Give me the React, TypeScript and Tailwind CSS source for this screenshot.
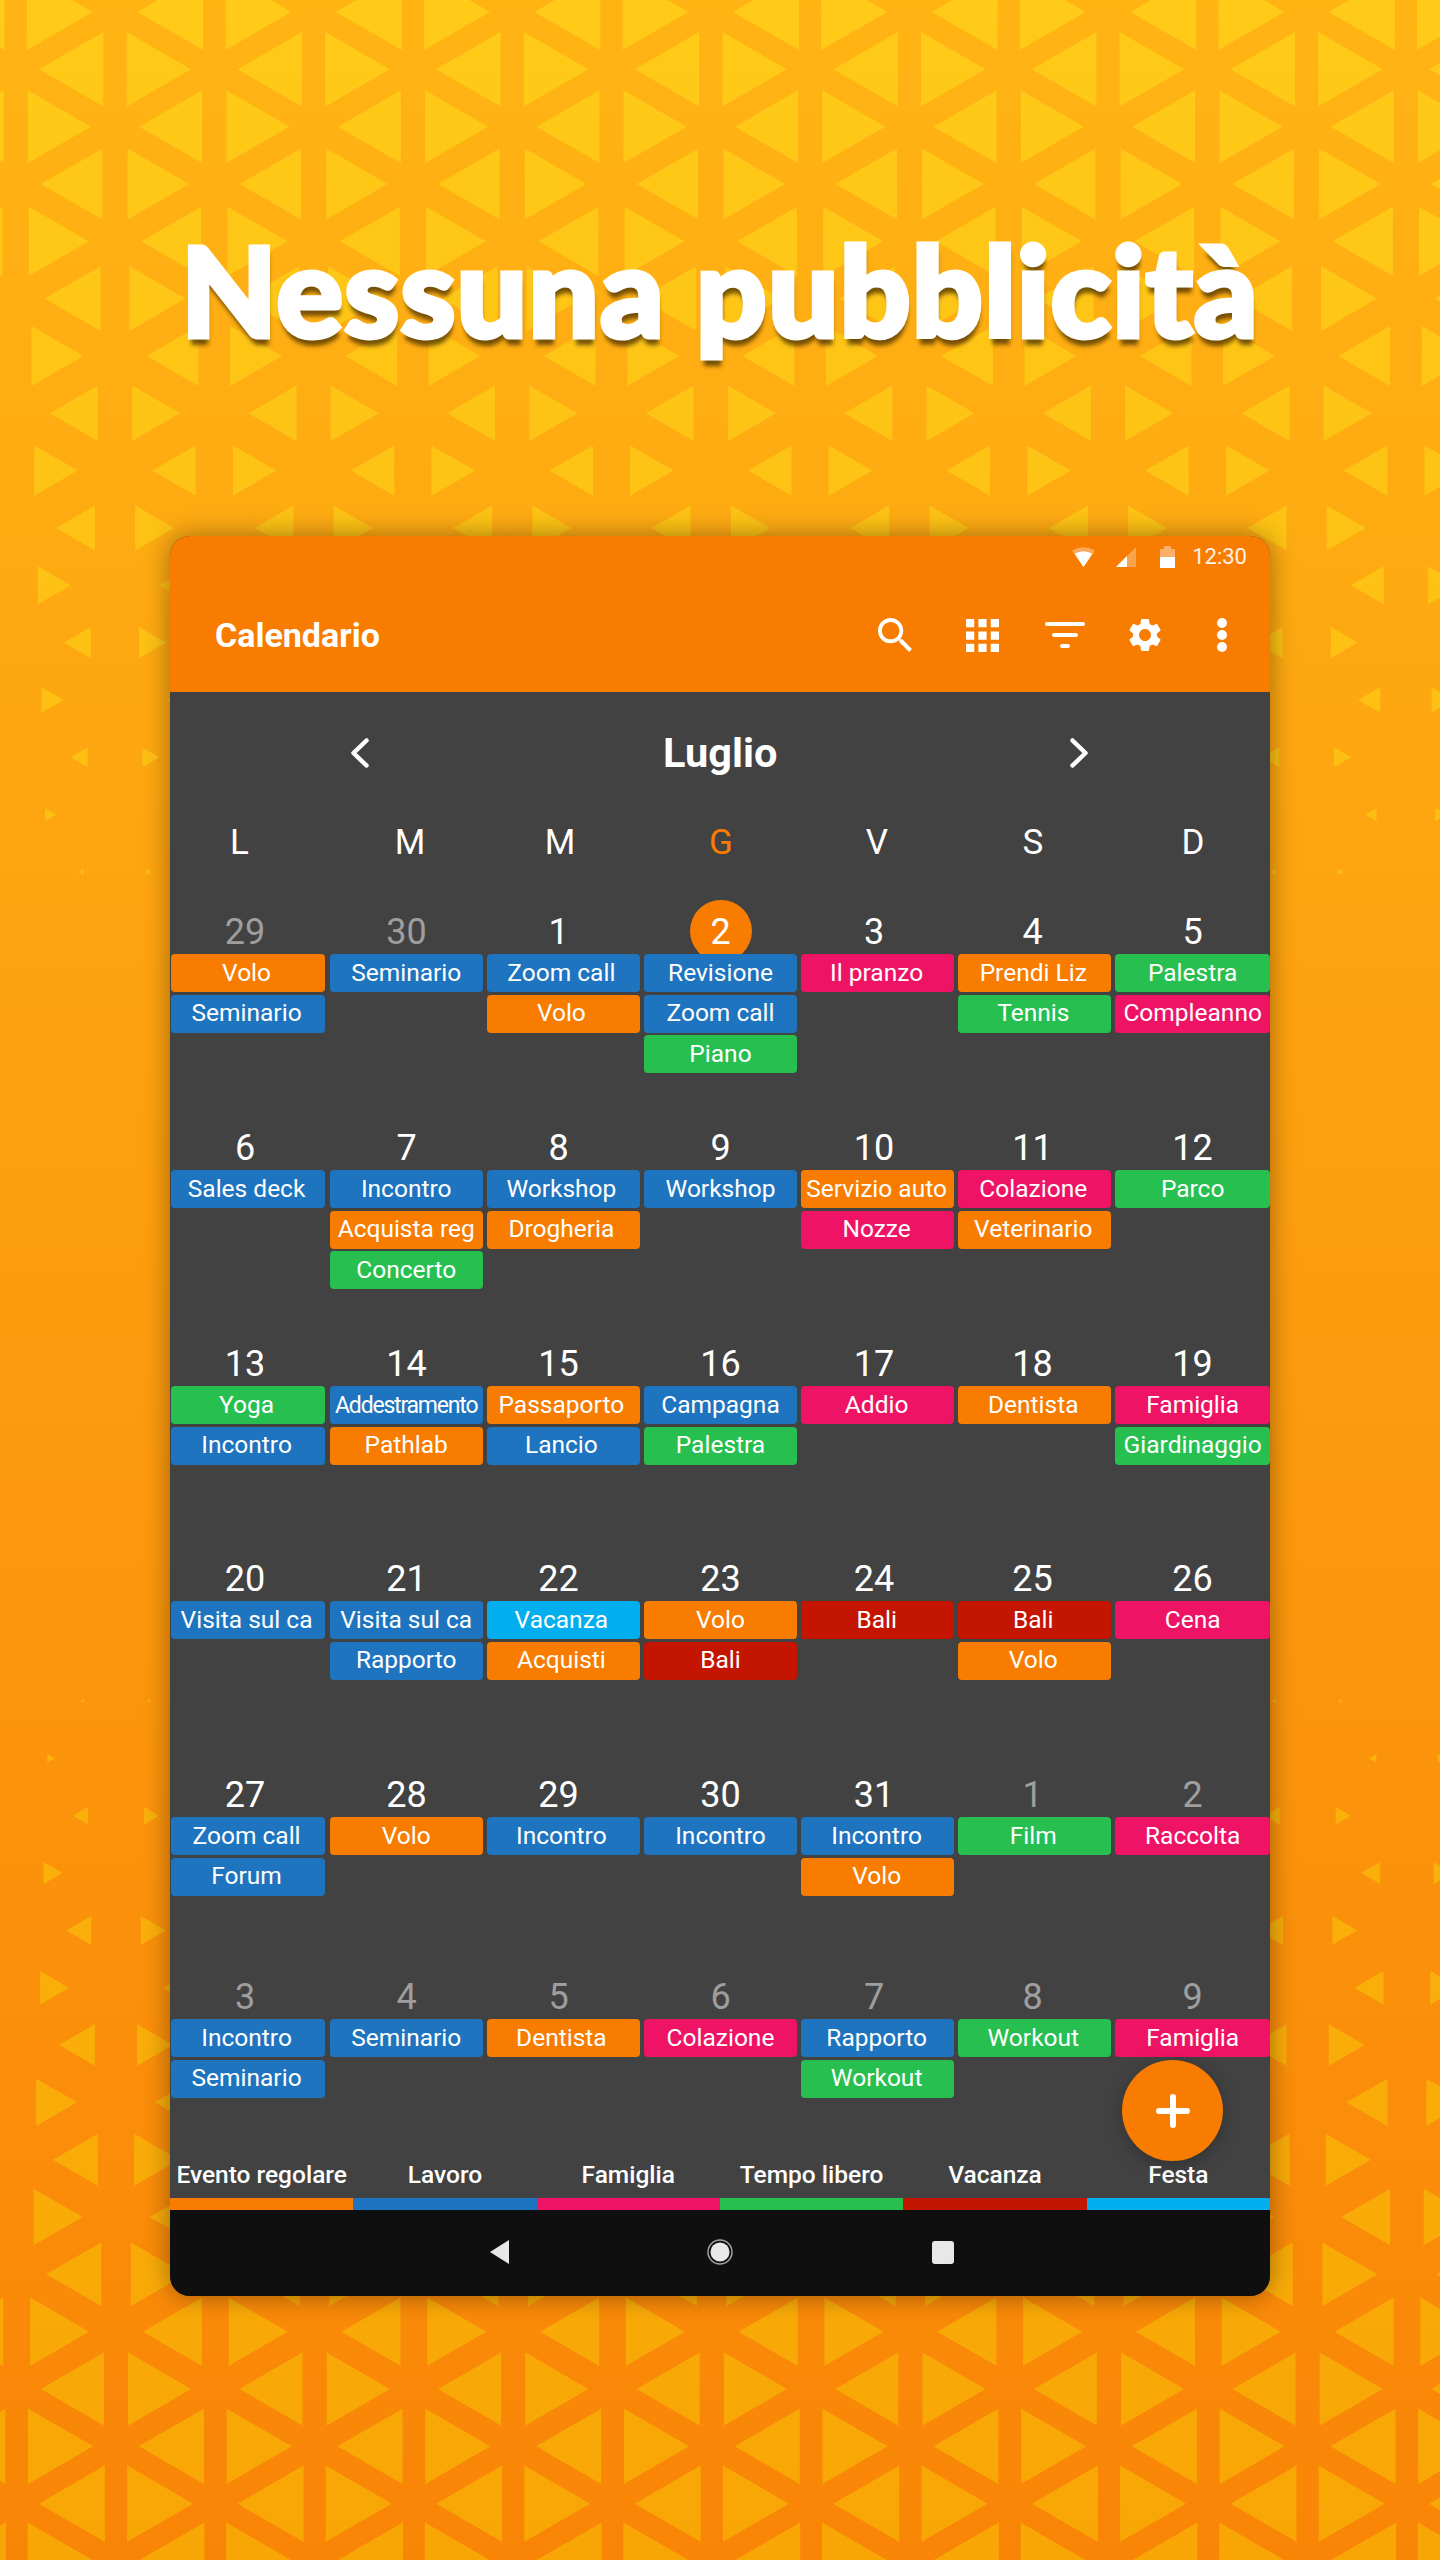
import React from "react";

type Ev = [string, string];
const o = "bg-[#f77c00]";
const b = "bg-[#1e74be]";
const p = "bg-[#ef1365]";
const g = "bg-[#27bf4f]";
const r = "bg-[#c41500]";
const c = "bg-[#03aeee]";

type Day = { n: number; muted?: boolean; today?: boolean; ev: Ev[] };

const weeks: { h: string; days: Day[] }[] = [
  {
    h: "h-[216px]",
    days: [
      { n: 29, muted: true, ev: [["Volo", o], ["Seminario", b]] },
      { n: 30, muted: true, ev: [["Seminario", b]] },
      { n: 1, ev: [["Zoom call", b], ["Volo", o]] },
      { n: 2, today: true, ev: [["Revisione", b], ["Zoom call", b], ["Piano", g]] },
      { n: 3, ev: [["Il pranzo", p]] },
      { n: 4, ev: [["Prendi Liz", o], ["Tennis", g]] },
      { n: 5, ev: [["Palestra", g], ["Compleanno", p]] },
    ],
  },
  {
    h: "h-[216px]",
    days: [
      { n: 6, ev: [["Sales deck", b]] },
      { n: 7, ev: [["Incontro", b], ["Acquista reg", o], ["Concerto", g]] },
      { n: 8, ev: [["Workshop", b], ["Drogheria", o]] },
      { n: 9, ev: [["Workshop", b]] },
      { n: 10, ev: [["Servizio auto", o], ["Nozze", p]] },
      { n: 11, ev: [["Colazione", p], ["Veterinario", o]] },
      { n: 12, ev: [["Parco", g]] },
    ],
  },
  {
    h: "h-[215px]",
    days: [
      { n: 13, ev: [["Yoga", g], ["Incontro", b]] },
      { n: 14, ev: [["Addestramento", b], ["Pathlab", o]] },
      { n: 15, ev: [["Passaporto", o], ["Lancio", b]] },
      { n: 16, ev: [["Campagna", b], ["Palestra", g]] },
      { n: 17, ev: [["Addio", p]] },
      { n: 18, ev: [["Dentista", o]] },
      { n: 19, ev: [["Famiglia", p], ["Giardinaggio", g]] },
    ],
  },
  {
    h: "h-[216px]",
    days: [
      { n: 20, ev: [["Visita sul ca", b]] },
      { n: 21, ev: [["Visita sul ca", b], ["Rapporto", b]] },
      { n: 22, ev: [["Vacanza", c], ["Acquisti", o]] },
      { n: 23, ev: [["Volo", o], ["Bali", r]] },
      { n: 24, ev: [["Bali", r]] },
      { n: 25, ev: [["Bali", r], ["Volo", o]] },
      { n: 26, ev: [["Cena", p]] },
    ],
  },
  {
    h: "h-[202px]",
    days: [
      { n: 27, ev: [["Zoom call", b], ["Forum", b]] },
      { n: 28, ev: [["Volo", o]] },
      { n: 29, ev: [["Incontro", b]] },
      { n: 30, ev: [["Incontro", b]] },
      { n: 31, ev: [["Incontro", b], ["Volo", o]] },
      { n: 1, muted: true, ev: [["Film", g]] },
      { n: 2, muted: true, ev: [["Raccolta", p]] },
    ],
  },
  {
    h: "h-[182px]",
    days: [
      { n: 3, muted: true, ev: [["Incontro", b], ["Seminario", b]] },
      { n: 4, muted: true, ev: [["Seminario", b]] },
      { n: 5, muted: true, ev: [["Dentista", o]] },
      { n: 6, muted: true, ev: [["Colazione", p]] },
      { n: 7, muted: true, ev: [["Rapporto", b], ["Workout", g]] },
      { n: 8, muted: true, ev: [["Workout", g]] },
      { n: 9, muted: true, ev: [["Famiglia", p]] },
    ],
  },
];

const cellPad = [
  "pl-[1px] pr-[2px]",
  "pl-[2.5px] pr-[1.5px]",
  "pl-[2.5px] pr-[1.5px]",
  "pl-[2.5px] pr-[1.5px]",
  "pl-[2.5px] pr-[1.5px]",
  "pl-[2.5px] pr-[1.5px]",
  "pl-[2.5px]",
];

const pillShift = ["pr-[3px]", "", "pr-[4px]", "", "pr-[2px]", "pr-[3px]", ""];

const legend: [string, string][] = [
  ["Evento regolare", o],
  ["Lavoro", b],
  ["Famiglia", p],
  ["Tempo libero", g],
  ["Vacanza", r],
  ["Festa", c],
];

function lerp(table: number[][], y: number) {
  if (y <= table[0][0]) return table[0][1];
  for (let i = 1; i < table.length; i++) {
    if (y <= table[i][0]) {
      const [y0, w0] = table[i - 1];
      const [y1, w1] = table[i];
      return w0 + ((w1 - w0) * (y - y0)) / (y1 - y0);
    }
  }
  return table[table.length - 1][1];
}

const topW = [
  [12, 66], [241, 60], [413, 48], [528, 39], [642, 27], [757, 17], [872, 5.5], [929, 1], [960, 0],
];
const botW = [
  [1642, 0], [1700, 3.5], [1758, 7.5], [1815, 15], [1873, 19], [1930, 25], [1987, 29], [2045, 36],
  [2102, 41], [2159, 45], [2217, 49], [2274, 55], [2332, 59], [2389, 63], [2446, 65], [2503, 66], [2600, 67],
];

function tri(bar: number, y: number, w: number) {
  const h = (w * 2) / Math.sqrt(3) / 2;
  const base = 33.1 - w / 3;
  const f = (n: number) => n.toFixed(1);
  return (
    `M${f(bar + base)} ${f(y - h)}L${f(bar + base + w)} ${f(y)}L${f(bar + base)} ${f(y + h)}Z` +
    `M${f(bar - base)} ${f(y - h)}L${f(bar - base - w)} ${f(y)}L${f(bar - base)} ${f(y + h)}Z`
  );
}

function buildPattern() {
  let d = "";
  for (let k = 0; k <= 17; k++) {
    const y = 12 + 57.33 * k;
    const w = lerp(topW, y);
    if (w < 0.5) continue;
    const x0 = k % 2 === 0 ? 15.7 : 115;
    for (let n = -1; n < 9; n++) d += tri(x0 + 198.6 * n, y, w);
  }
  for (let j = -13; j <= 4; j++) {
    const y = 2389 + 57.33 * j;
    const w = lerp(botW, y);
    if (w < 0.5) continue;
    const x0 = j % 2 === 0 ? 116 : 16.7;
    for (let n = -1; n < 9; n++) d += tri(x0 + 198.6 * n, y, w);
  }
  return d;
}

function Background() {
  return (
    <svg className="absolute inset-0" width="1440" height="2560" viewBox="0 0 1440 2560">
      <defs>
        <linearGradient id="tg" gradientUnits="userSpaceOnUse" x1="0" y1="0" x2="0" y2="2560">
          <stop offset="0" stopColor="#ffca18" />
          <stop offset="1" stopColor="#f8a605" />
        </linearGradient>
      </defs>
      <path d={buildPattern()} fill="url(#tg)" />
    </svg>
  );
}

function EventPill({ label, color, shift }: { label: string; color: string; shift: string }) {
  const small = label === "Addestramento";
  return (
    <div
      className={`h-[38px] rounded-[4px] flex items-center justify-center overflow-hidden whitespace-nowrap text-white leading-none ${color} ${shift} ${
        small ? "text-[23px] tracking-[-1.2px]" : "text-[24.5px]"
      }`}
    >
      {label}
    </div>
  );
}

function Week({ h, days }: { h: string; days: Day[] }) {
  return (
    <div className={h}>
      <div className="grid grid-cols-[150px_173px_131px_193px_114px_203px_117px] h-[46px] items-center">
        {days.map((d, i) => (
          <div key={i} className="relative flex justify-center">
            {d.today && (
              <div className="absolute top-1/2 left-1/2 -translate-x-1/2 -translate-y-1/2 w-[62px] h-[62px] rounded-full bg-[#f77c00]" />
            )}
            <span
              className={`relative pt-[2px] text-[36px] leading-none ${
                d.muted ? "text-[#9e9e9e]" : "text-white"
              }`}
            >
              {d.n}
            </span>
          </div>
        ))}
      </div>
      <div className="relative grid grid-cols-7">
        {days.map((d, i) => (
          <div key={i} className={`flex flex-col gap-y-[2.5px] ${cellPad[i]}`}>
            {d.ev.map((e, j) => (
              <EventPill key={j} label={e[0]} color={e[1]} shift={pillShift[i]} />
            ))}
          </div>
        ))}
      </div>
    </div>
  );
}

function StatusBar() {
  return (
    <div className="h-[42px] flex items-center justify-end pr-[23px] text-white/90">
      <svg width="23" height="20" viewBox="0 0 23 20" className="mr-[21px]">
        <path d="M0 3.5Q11.5-3 23 3.5L11.5 20Z" fill="#fff" fillOpacity=".35" />
        <path d="M2.6 6.7Q11.5 1.6 20.4 6.7L11.5 20Z" fill="#fff" />
      </svg>
      <svg width="20" height="20" viewBox="0 0 20 20" className="mr-[24px]">
        <path d="M0 20L20 0V20Z" fill="#fff" fillOpacity=".3" />
        <path d="M0 20L11 9V20Z" fill="#fff" />
      </svg>
      <svg width="15" height="22" viewBox="0 0 15 22" className="mr-[17px]">
        <path d="M4 0H11V3H15V11H0V3H4Z" fill="#fff" fillOpacity=".4" />
        <path d="M0 11H15V22H0Z" fill="#fff" />
      </svg>
      <span className="text-[22px] leading-none text-white/90">12:30</span>
    </div>
  );
}

function Toolbar() {
  return (
    <div className="h-[114px] flex items-center pl-[45px] pr-[43px] text-white">
      <span className="text-[34px] font-bold leading-none">Calendario</span>
      <svg className="ml-auto" width="34" height="34" viewBox="3 3 17.5 17.5" fill="#fff">
        <path d="M15.5 14h-.79l-.28-.27C15.41 12.59 16 11.11 16 9.5 16 5.91 13.09 3 9.5 3S3 5.91 3 9.5 5.91 16 9.5 16c1.61 0 3.09-.59 4.23-1.57l.27.28v.79l5 4.99L20.49 19l-4.99-5zm-6 0C7.01 14 5 11.99 5 9.5S7.01 5 9.5 5 14 7.01 14 9.5 11.99 14 9.5 14z" />
      </svg>
      <svg className="ml-[54px]" width="33" height="33" viewBox="4 4 16 16" fill="#fff">
        <path d="M4 8h4V4H4v4zm6 12h4v-4h-4v4zm-6 0h4v-4H4v4zm0-6h4v-4H4v4zm6 0h4v-4h-4v4zm6-10v4h4V4h-4zm-6 4h4V4h-4v4zm6 6h4v-4h-4v4zm0 6h4v-4h-4v4z" />
      </svg>
      <svg className="ml-[46px]" width="40" height="28" viewBox="0 0 40 28" stroke="#fff" strokeWidth="4" strokeLinecap="round">
        <path d="M2 3H38M9 14H31M17 25H23" />
      </svg>
      <svg className="ml-[40.5px]" width="40" height="40" viewBox="0 0 24 24" fill="#fff">
        <path d="M19.14 12.94c.04-.3.06-.61.06-.94 0-.32-.02-.64-.07-.94l2.03-1.58c.18-.14.23-.41.12-.61l-1.92-3.32c-.12-.22-.37-.29-.59-.22l-2.39.96c-.5-.38-1.03-.7-1.62-.94l-.36-2.54c-.04-.24-.24-.41-.48-.41h-3.84c-.24 0-.43.17-.47.41l-.36 2.54c-.59.24-1.13.57-1.62.94l-2.39-.96c-.22-.08-.47 0-.59.22L2.74 8.87c-.12.21-.08.47.12.61l2.03 1.58c-.05.3-.09.63-.09.94s.02.64.07.94l-2.03 1.58c-.18.14-.23.41-.12.61l1.92 3.32c.12.22.37.29.59.22l2.39-.96c.5.38 1.03.7 1.62.94l.36 2.54c.05.24.24.41.48.41h3.84c.24 0 .44-.17.47-.41l.36-2.54c.59-.24 1.13-.56 1.62-.94l2.39.96c.22.08.47 0 .59-.22l1.92-3.32c.12-.22.07-.47-.12-.61l-2.01-1.58zM12 15.6c-1.98 0-3.6-1.62-3.6-3.6s1.62-3.6 3.6-3.6 3.6 1.62 3.6 3.6-1.62 3.6-3.6 3.6z" />
      </svg>
      <svg className="ml-[52px]" width="10" height="34" viewBox="0 0 10 34" fill="#fff">
        <circle cx="5" cy="5" r="5" />
        <circle cx="5" cy="17" r="5" />
        <circle cx="5" cy="29" r="5" />
      </svg>
    </div>
  );
}

function Chevron({ right }: { right?: boolean }) {
  return (
    <svg width="20" height="30" viewBox="0 0 20 30" fill="none" stroke="#fff" strokeWidth="4.5" strokeLinecap="round" strokeLinejoin="round">
      <path d={right ? "M3.5 2.5L16.5 15L3.5 27.5" : "M16.5 2.5L3.5 15L16.5 27.5"} />
    </svg>
  );
}

export default function App() {
  const letters = ["L", "M", "M", "G", "V", "S", "D"];
  return (
    <div className="relative w-[1440px] h-[2560px] overflow-hidden bg-linear-to-b from-[#ffb414] to-[#f98507] font-[Roboto,sans-serif]">
      <Background />
      <div className="relative h-[536px] pt-[224px] text-center">
        <h1 className="font-[Lato,sans-serif] font-black text-[124px] tracking-[1.4px] leading-[130px] text-white [-webkit-text-stroke:5px_white] [text-shadow:1px_8px_4px_rgba(70,45,0,0.75)]">
          Nessuna pubblicità
        </h1>
      </div>
      <div className="relative mx-[170px] h-[1760px] rounded-[20px] shadow-[0_0_26px_rgba(0,0,0,0.38)] overflow-hidden bg-[#424242] flex flex-col">
        <div className="h-[156px] bg-[#f77c00]">
          <StatusBar />
          <Toolbar />
        </div>
        <div className="h-[122px] flex items-center">
          <div className="ml-[180px]">
            <Chevron />
          </div>
          <span className="ml-[293px] text-[41.5px] font-bold text-white leading-none">Luglio</span>
          <div className="ml-[292px]">
            <Chevron right />
          </div>
        </div>
        <div className="grid grid-cols-[139px_202px_98px_224px_88px_224px_96px] h-[94px]">
          {letters.map((l, i) => (
            <div
              key={i}
              className={`h-[54px] pt-[2px] flex items-center justify-center text-[35px] font-normal leading-none ${
                i === 3 ? "text-[#f77c00]" : "text-white"
              }`}
            >
              {l}
            </div>
          ))}
        </div>
        {weeks.map((w, i) => (
          <Week key={i} h={w.h} days={w.days} />
        ))}
        <div className="grid grid-cols-6 h-[43px] pb-[3px] items-center">
          {legend.map(([l]) => (
            <div key={l} className="text-center text-[24.5px] font-medium text-white leading-none">
              {l}
            </div>
          ))}
        </div>
        <div className="grid grid-cols-6 h-[12px]">
          {legend.map(([l, col]) => (
            <div key={l} className={col} />
          ))}
        </div>
        <div className="h-[86px] bg-[#0f0f0f] relative flex items-center justify-center">
          <svg className="absolute left-[320px] top-[30px]" width="19" height="24" viewBox="0 0 19 24" fill="#e8e8e8">
            <path d="M19 0V24L0 12Z" />
          </svg>
          <svg className="absolute left-[537px] top-[29px]" width="26" height="26" viewBox="0 0 26 26">
            <circle cx="13" cy="13" r="12" fill="none" stroke="#a0a0a0" strokeWidth="1.5" />
            <circle cx="13" cy="13" r="9.5" fill="#e8e8e8" />
          </svg>
          <div className="absolute left-[762px] top-[31px] w-[22px] h-[23px] rounded-[3px] bg-[#e8e8e8]" />
        </div>
        <div className="absolute left-[952px] top-[1524px] w-[101px] h-[101px] rounded-full bg-[#f77c00] shadow-[0_4px_16px_rgba(0,0,0,0.25)] flex items-center justify-center">
          <svg width="34" height="34" viewBox="0 0 34 34" stroke="#fff" strokeWidth="6" strokeLinecap="round">
            <path d="M17 3V31M3 17H31" />
          </svg>
        </div>
      </div>
    </div>
  );
}
